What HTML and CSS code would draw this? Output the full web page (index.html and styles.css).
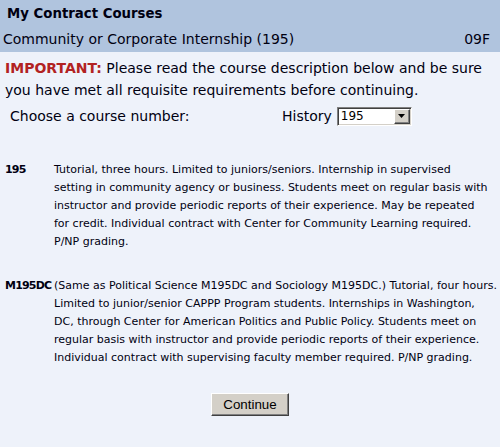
FILE: index.html
```html
<!DOCTYPE html>
<html lang="en">
<head>
<meta charset="utf-8">
<title>My Contract Courses</title>
<link rel="stylesheet" href="styles.css">
</head>
<body>
<div class="page">
  <div class="header">
    <div class="title">My Contract Courses</div>
    <div class="subtitle"><span>Community or Corporate Internship (195)</span><span>09F</span></div>
  </div>
  <div class="notice"><span class="important">IMPORTANT:</span> Please read the course description below and be sure<br>you have met all requisite requirements before continuing.</div>
  <div class="chooser">
    <span class="choose-label">Choose a course number:</span>
    <span class="history">History</span>
    <div class="select"><span class="select-value">195</span><span class="select-arrow"><svg width="7" height="4" viewBox="0 0 7 4"><path d="M0 0H7L3.5 4Z" fill="#000"/></svg></span></div>
  </div>
  <div class="courses">
    <div class="course">
      <div class="course-num">195</div>
      <div class="course-desc">Tutorial, three hours. Limited to juniors/seniors. Internship in supervised<br>setting in community agency or business. Students meet on regular basis with<br>instructor and provide periodic reports of their experience. May be repeated<br>for credit. Individual contract with Center for Community Learning required.<br>P/NP grading.</div>
    </div>
    <div class="course">
      <div class="course-num">M195DC</div>
      <div class="course-desc">(Same as Political Science M195DC and Sociology M195DC.) Tutorial, four hours.<br>Limited to junior/senior CAPPP Program students. Internships in Washington,<br>DC, through Center for American Politics and Public Policy. Students meet on<br>regular basis with instructor and provide periodic reports of their experience.<br>Individual contract with supervising faculty member required. P/NP grading.</div>
    </div>
  </div>
  <div class="actions"><button class="btn" type="button">Continue</button></div>
</div>
</body>
</html>
```

FILE: styles.css
```css
html, body {
  margin: 0;
  padding: 0;
  background: #eef2fa;
}
body {
  font-family: "DejaVu Sans", Verdana, sans-serif;
  color: #000011;
}
.page {
  width: 500px;
  height: 447px;
  overflow: hidden;
}
.header {
  background: #b0c4de;
  height: 52px;
}
.title {
  font-size: 13.3px;
  font-weight: bold;
  line-height: 26px;
  padding: 1px 0 0 7px;
  height: 26px;
}
.subtitle {
  display: flex;
  justify-content: space-between;
  font-size: 14px;
  line-height: 25px;
  padding: 0 10px 0 3px;
}
.notice {
  margin-top: 5px;
  padding-left: 5px;
  font-size: 14px;
  line-height: 22px;
  white-space: nowrap;
}
.important {
  color: #b22222;
  font-weight: bold;
}
.chooser {
  margin-top: 2px;
  height: 26px;
  display: grid;
  grid-template-columns: 272px auto auto;
  justify-content: start;
  align-items: center;
  padding-left: 10px;
  font-size: 14px;
  line-height: 26px;
}
.history {
  margin-right: 5px;
}
.select {
  box-sizing: border-box;
  width: 75px;
  height: 19px;
  display: flex;
  align-items: stretch;
  background: #fff;
  border-top: 1px solid #808080;
  border-left: 1px solid #808080;
  border-bottom: 1px solid #ffffff;
  border-right: 1px solid #ffffff;
  box-shadow: inset 1px 1px 0 #404040, inset -1px -1px 0 #d4d0c8;
  padding: 1px;
}
.select-value {
  flex: 1;
  font-size: 12px;
  line-height: 15px;
  padding-left: 2px;
  color: #000;
}
.select-arrow {
  box-sizing: border-box;
  width: 16px;
  display: flex;
  align-items: center;
  justify-content: center;
  background: #d4d0c8;
  border-top: 1px solid #ffffff;
  border-left: 1px solid #ffffff;
  border-bottom: 1px solid #404040;
  border-right: 1px solid #404040;
  box-shadow: inset -1px -1px 0 #808080;
}
.courses {
  margin-top: 32px;
}
.course {
  display: grid;
  grid-template-columns: 49px auto;
  padding-left: 5px;
  font-size: 11px;
  line-height: 18px;
  margin-bottom: 26px;
}
.course-num {
  font-weight: bold;
  letter-spacing: -0.8px;
}
.course-desc {
  white-space: nowrap;
}
.actions {
  display: flex;
  justify-content: center;
  margin-top: 2px;
}
.btn {
  box-sizing: border-box;
  width: 78px;
  height: 23px;
  padding: 0;
  background: #d4d0c8;
  border-top: 1px solid #ffffff;
  border-left: 1px solid #ffffff;
  border-bottom: 1px solid #404040;
  border-right: 1px solid #404040;
  box-shadow: inset -1px -1px 0 #808080;
  font-family: "Liberation Sans", Arial, sans-serif;
  font-size: 13.33px;
  color: #000;
}
```
